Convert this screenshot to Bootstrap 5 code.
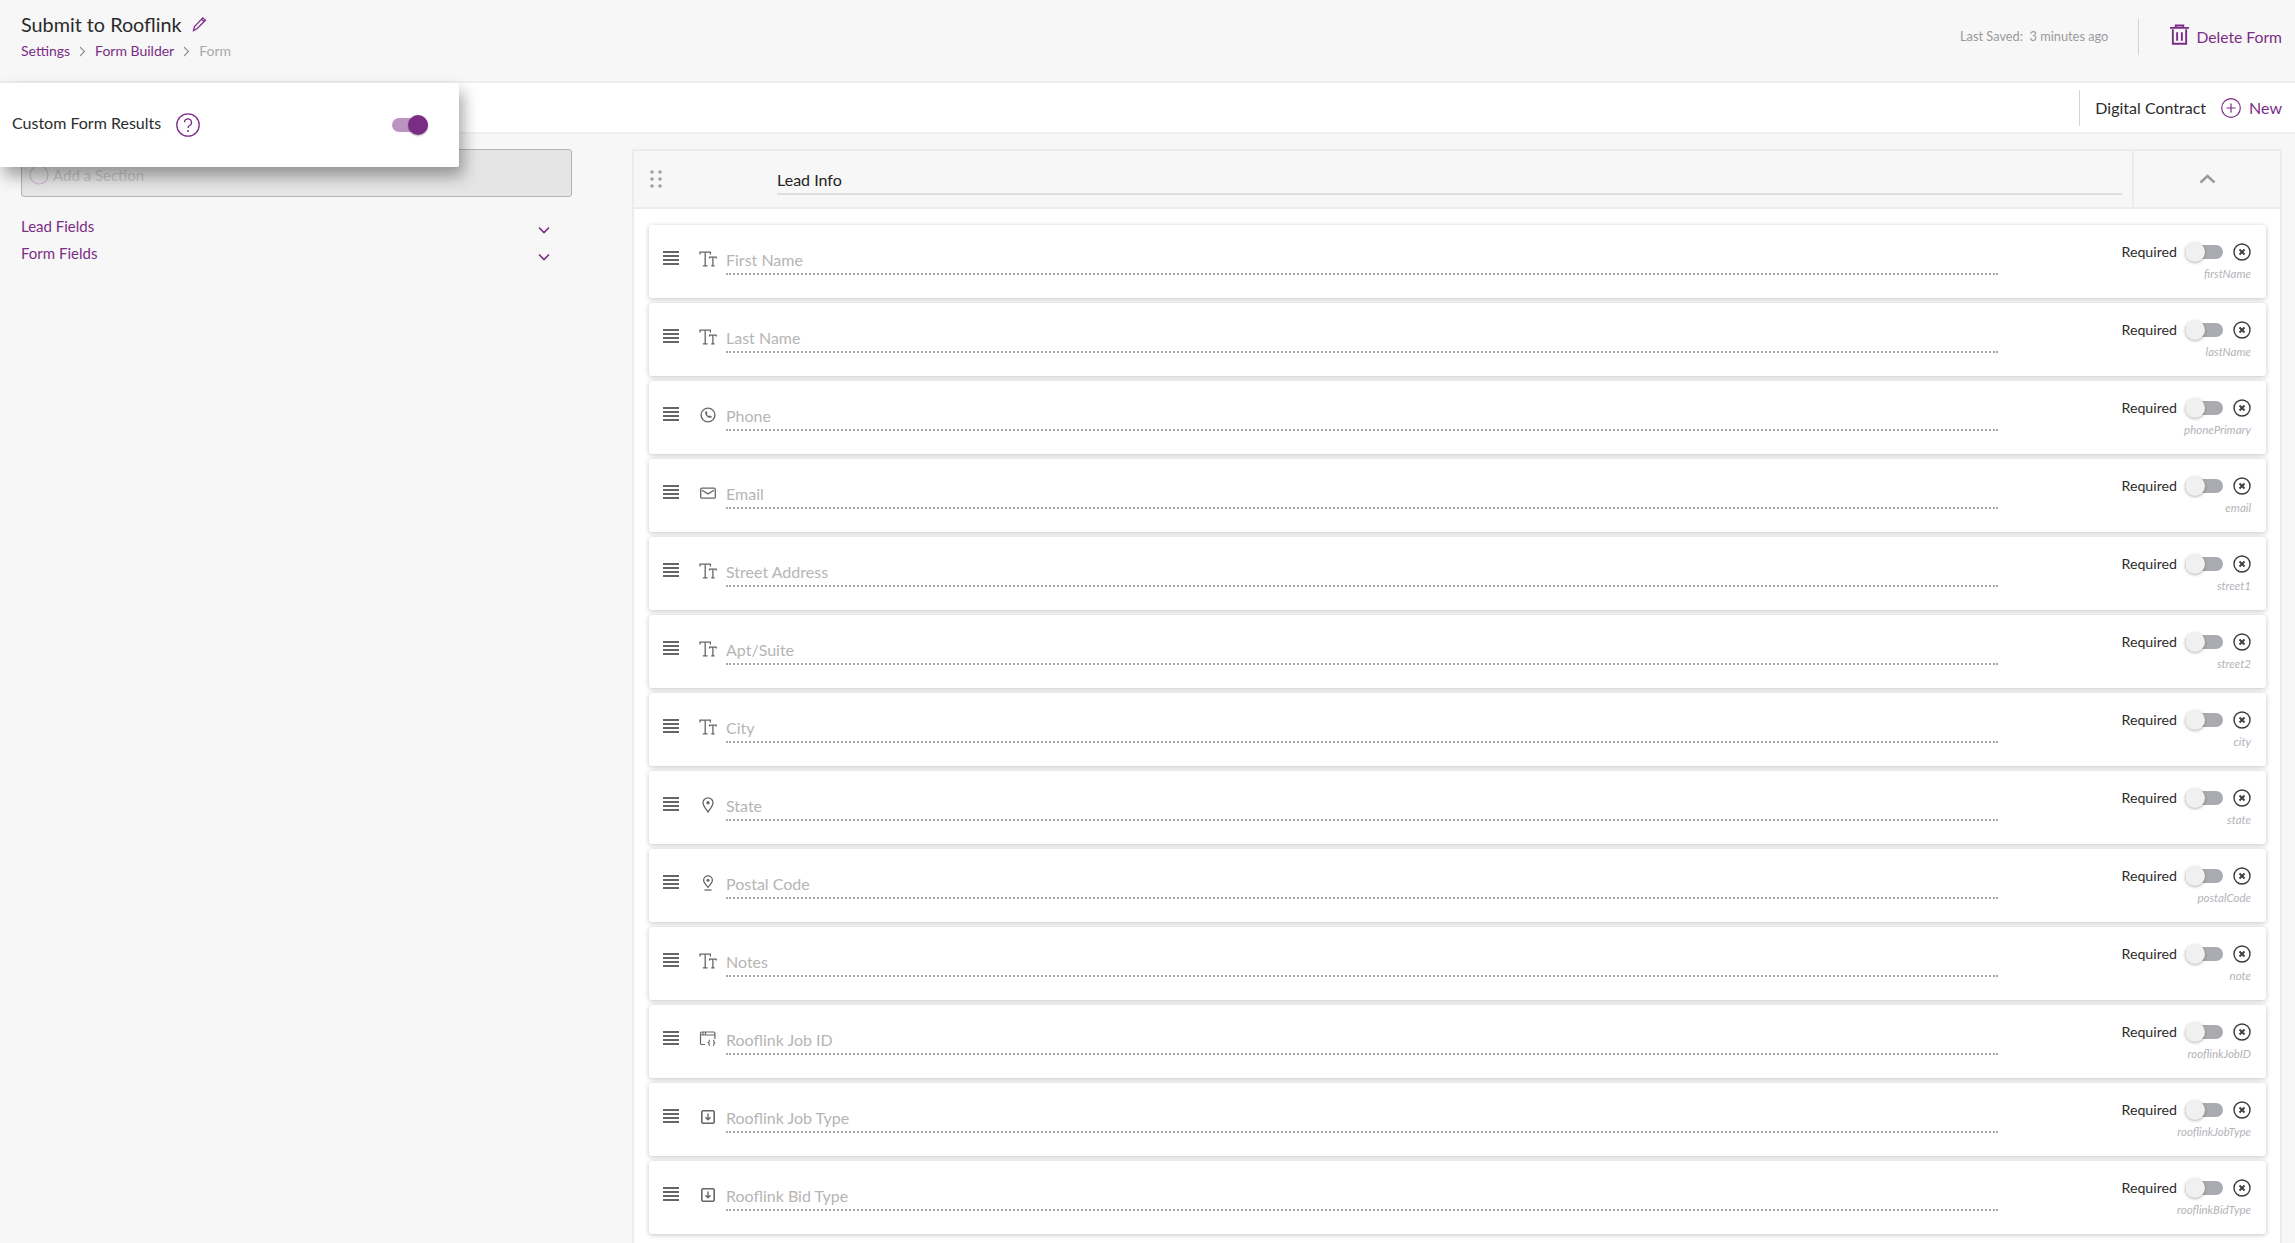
<!DOCTYPE html>
<html lang="en"><head><meta charset="utf-8"><title>Form</title>
<link rel="stylesheet" href="https://cdn.jsdelivr.net/npm/bootstrap@5.3.0/dist/css/bootstrap.min.css">
<style>
html,body{height:100%;overflow:hidden}
body{background:#f7f7f7;font-family:Lato,"Liberation Sans",sans-serif;color:#2b2b2b;position:relative}
.plum{color:#7b2d86}
.plum-link{color:#7b2d86;text-decoration:none}
.top-bar{height:83px;padding:0 13px 0 21px;border-bottom:2px solid #efefef}
.top-title{font-size:19.8px;line-height:24px;margin-top:12px}
.edit-mark{margin-left:10px}
.crumbs{font-size:14px;line-height:18px;margin-top:6px}
.crumbs svg{margin:0 9px 0 9px}
.crumbs .now{color:#aaa}
.top-right{padding-bottom:7px}
.saved{font-size:12.8px;color:#9a9a9a}
.vbar{width:1px;height:36px;background:#d4d4d4}
.vbar-top{margin:0 31px 0 30px}
.del{font-size:15.7px;margin-top:2px;gap:7px}
.trash{margin-top:-6px}
.tab-bar{height:51px;background:#fff;border-bottom:2px solid #efefef;padding:0 13px 0 0;font-size:16px}
.tab-name{margin-left:15px}
.tab-new{margin-left:15px;gap:8px}
.float-panel{position:absolute;left:0;top:83px;width:459px;height:84px;background:#fff;box-shadow:4px 9px 16px rgba(0,0,0,.36);padding-left:12px;z-index:5;font-size:16px;border-radius:0 0 2px 0}
.float-label{margin-top:-4px}
.help-mark{margin:0 192px 0 15px}
.pill-on{width:36px;height:14px;border-radius:7px;background:#bc94c2;position:relative;display:block}
.pill-on::after{content:"";position:absolute;right:0;top:-3px;width:20px;height:20px;border-radius:50%;background:#7b2d86;box-shadow:0 1px 2px rgba(0,0,0,.3)}
.workarea{height:1109px}
.side{width:632px;padding:15px 0 0 21px;flex:none}
.add-box{width:551px;height:48px;background:#e5e5e5;border:1px solid #b4b4b8;border-radius:3px;padding:4px 0 0 7px;color:#c6c6c6;font-size:15px}
.fold{width:529px;font-size:15px;line-height:27px}
.fold svg{margin-top:6px}
.sheet{width:1650px;margin-top:15px;background:#fff;border:2px solid #ececec;border-bottom:0;flex:none}
.sheet-head{height:58px;background:#f7f7f7;border-bottom:2px solid #ececec}
.grip{width:144px;padding:19px 0 0 16px}
.sheet-name{width:1345px;height:44px;font-size:16px;line-height:20px;padding-top:19px;border-bottom:2px solid #dedede;color:#222;flex:none}
.collapse-cell{width:149px;margin-left:10px;height:100%;border-left:2px solid #ececec}
.rows{padding:16px 14px 15px 15px;gap:5px}
.field-row{height:73px;background:#fff;border-radius:3px;box-shadow:0 1px 5px rgba(0,0,0,.24)}
.bars{width:50px;padding:26px 0 0 14px;flex:none}
.ftype{width:27px;padding-top:26px;flex:none;height:50px}
.fname{width:1272px;height:50px;flex:none;padding-top:25px;font-size:16px;line-height:20px;color:#b5b5b5;border-bottom:2px dotted #a8a8a8}
.ftail{margin-left:auto;width:170px;padding:17px 15px 0 0;flex:none;text-align:right}
.req{font-size:14.2px;line-height:20px;color:#2b2b2b}
.pill-off{width:38px;height:14px;margin:0 10px 0 8px;border-radius:7px;background:#a9abb0;position:relative;display:block;flex:none}
.pill-off::after{content:"";position:absolute;left:0;top:-3px;width:20px;height:20px;border-radius:50%;background:#f0f0f0;box-shadow:0 1px 3px rgba(0,0,0,.3)}
.close-mark{flex:none}
.fkey{font-size:11.5px;line-height:15px;margin-top:4px;font-style:italic;color:#b3b3b8}
</style></head>
<body>
<svg width="0" height="0" class="d-block" aria-hidden="true"><defs>
<symbol id="bars" viewBox="0 0 16 14"><path d="M0 1h16M0 5h16M0 9h16M0 13h16" stroke="#666" stroke-width="2" fill="none"/></symbol>
<symbol id="tt" viewBox="0 0 18 16"><path d="M1 3.400V1.200h10.400v2.200M6.200 1.200v13.200M3.800 14.900h4.800M10.600 7.600V6.200h6.600v1.400M13.900 6.200v8.200M12.200 14.900h3.400" stroke="#666" stroke-width="1.300" fill="none"/></symbol>
<symbol id="tel" viewBox="0 0 16 16"><circle cx="8" cy="8" r="6.900" stroke="#666" stroke-width="1.400" fill="none"/><path d="M5.200 4.400c-.6 3.600 2.600 7 6.200 6.400l.3-1.500-2-.9-.9.700c-.9-.4-1.600-1.200-2-2.100l.7-.8-.8-1.900z" fill="#666"/></symbol>
<symbol id="mail" viewBox="0 0 16 16"><rect x=".7" y="3.200" width="14.600" height="10" rx="1.200" stroke="#666" stroke-width="1.300" fill="none"/><path d="M2 5.300l6 3.600 6-3.600" stroke="#666" stroke-width="1.300" fill="none"/></symbol>
<symbol id="pin" viewBox="0 0 12 16"><path d="M6 15C3.500 11.500 1 8.800 1 5.800A5 5 0 0 1 11 5.800C11 8.800 8.500 11.500 6 15z" stroke="#666" stroke-width="1.300" fill="none"/><circle cx="6" cy="5.700" r="1.700" fill="#666"/></symbol>
<symbol id="pinb" viewBox="0 0 12 16"><path d="M6 12.200C3.800 9.800 1.600 7.800 1.600 5.300A4.400 4.400 0 0 1 10.400 5.300C10.400 7.800 8.200 9.800 6 12.200z" stroke="#666" stroke-width="1.300" fill="none"/><circle cx="6" cy="5.200" r="1.500" fill="#666"/><path d="M2.500 15h7" stroke="#666" stroke-width="1.300"/></symbol>
<symbol id="code" viewBox="0 0 17 16"><path d="M5.500 13.500H2.200a1.200 1.200 0 0 1-1.200-1.200V2.200A1.200 1.200 0 0 1 2.200 1h12a1.200 1.200 0 0 1 1.200 1.200V8M1 4h14.400M3.500 1v3M6 1v3" stroke="#666" stroke-width="1.200" fill="none"/><path d="M10.500 9c-1.300 0-.6 2.400-1.500 2.800.9.400.2 2.700 1.500 2.700M13.500 9c1.300 0 .6 2.400 1.500 2.800-.9.400-.2 2.700-1.500 2.700" stroke="#666" stroke-width="1.200" fill="none"/></symbol>
<symbol id="drop" viewBox="0 0 16 16"><rect x="1.800" y="1.800" width="12.400" height="12.400" rx="1.500" stroke="#666" stroke-width="1.600" fill="none"/><path d="M8 4.500v6M5.500 8.300L8 10.800l2.500-2.500" stroke="#666" stroke-width="1.400" fill="none"/></symbol>
<symbol id="xc" viewBox="0 0 18 18"><circle cx="9" cy="9" r="8" stroke="#3c3c3c" stroke-width="1.400" fill="none"/><path d="M6.500 6.500l5 5M11.500 6.500l-5 5" stroke="#3c3c3c" stroke-width="1.800" fill="none"/></symbol>
<symbol id="down" viewBox="0 0 12 8"><path d="M1 1.500l5 5 5-5" stroke="#7b2d86" stroke-width="1.600" fill="none"/></symbol>
<symbol id="sep" viewBox="0 0 7 11"><path d="M1 1l4.500 4.500L1 10" stroke="#8e8e8e" stroke-width="1.100" fill="none"/></symbol>
</defs></svg>

<header class="top-bar d-flex justify-content-between">
  <div>
    <div class="top-title d-flex align-items-center">Submit to Rooflink
      <svg class="edit-mark" width="15" height="16" viewBox="0 0 15 16"><path d="M1.500 14.500l1-4L10.800 1.800l2.700 2.500L5 12.800zM9.500 3.200l2.700 2.500" stroke="#7b2d86" stroke-width="1.300" fill="none"/></svg>
    </div>
    <div class="crumbs d-flex align-items-center"><a class="plum-link" href="#">Settings</a><svg width="7" height="11"><use href="#sep"/></svg><a class="plum-link" href="#">Form Builder</a><svg width="7" height="11"><use href="#sep"/></svg><span class="now">Form</span></div>
  </div>
  <div class="top-right d-flex align-items-center">
    <span class="saved">Last Saved:&nbsp; 3 minutes ago</span>
    <span class="vbar vbar-top"></span>
    <a class="del plum-link d-flex align-items-center" href="#"><svg class="trash" width="19" height="21" viewBox="0 0 20 22"><path d="M0 4h20M6 4V1.500h8V4M3 5.500V20.800h14V5.500M7.500 8.500v9M12.500 8.500v9" stroke="#7b2d86" stroke-width="2" fill="none"/></svg>Delete Form</a>
  </div>
</header>

<div class="tab-bar d-flex justify-content-end align-items-center">
  <span class="vbar"></span>
  <span class="tab-name">Digital Contract</span>
  <a class="tab-new plum-link d-flex align-items-center" href="#"><svg width="20" height="20" viewBox="0 0 20 20"><circle cx="10" cy="10" r="9.300" stroke="#7b2d86" stroke-width="1.200" fill="none"/><path d="M10 5.500v9M5.500 10h9" stroke="#7b2d86" stroke-width="1.200"/></svg>New</a>
</div>

<section class="float-panel d-flex align-items-center">
  <span class="float-label">Custom Form Results</span>
  <svg class="help-mark" width="24" height="24" viewBox="0 0 24 24"><circle cx="12" cy="12" r="11.200" stroke="#7b2d86" stroke-width="1.300" fill="none"/><path d="M8.500 9.300A3.500 3.500 0 1 1 13.500 12.500c-1 .6-1.500 1.100-1.500 2.500" stroke="#7b2d86" stroke-width="1.300" fill="none"/><circle cx="12" cy="18" r="1" fill="#7b2d86"/></svg>
  <span class="pill-on"></span>
</section>

<main class="workarea d-flex">
  <aside class="side">
    <div class="add-box d-flex align-items-center gap-1 mb-3"><svg width="20" height="20" viewBox="0 0 20 20"><circle cx="10" cy="10" r="9" stroke="#cdb8d1" stroke-width="1.200" fill="none"/></svg>Add a Section</div>
    <div class="fold d-flex justify-content-between align-items-center plum">Lead Fields<svg width="12" height="8"><use href="#down"/></svg></div>
    <div class="fold d-flex justify-content-between align-items-center plum">Form Fields<svg width="12" height="8"><use href="#down"/></svg></div>
  </aside>
  <section class="sheet">
    <div class="sheet-head d-flex">
      <div class="grip"><svg width="12" height="18" viewBox="0 0 12 18" class="d-block" fill="#a0a0a0"><circle cx="2" cy="2" r="1.800"/><circle cx="10" cy="2" r="1.800"/><circle cx="2" cy="9" r="1.800"/><circle cx="10" cy="9" r="1.800"/><circle cx="2" cy="16" r="1.800"/><circle cx="10" cy="16" r="1.800"/></svg></div>
      <div class="sheet-name">Lead Info</div>
      <div class="collapse-cell d-flex align-items-center justify-content-center"><svg width="17" height="10" viewBox="0 0 17 10"><path d="M1.500 8.500l7-6.500 7 6.500" stroke="#9a9a9a" stroke-width="2.500" fill="none"/></svg></div>
    </div>
    <div class="rows d-flex flex-column">
      <div class="field-row d-flex"><div class="bars"><svg width="16" height="14" class="d-block"><use href="#bars"/></svg></div><div class="ftype"><svg width="18" height="16" class="d-block"><use href="#tt"/></svg></div><div class="fname">First Name</div><div class="ftail"><div class="d-flex align-items-center justify-content-end"><span class="req">Required</span><span class="pill-off"></span><svg class="close-mark" width="18" height="18"><use href="#xc"/></svg></div><div class="fkey">firstName</div></div></div>
      <div class="field-row d-flex"><div class="bars"><svg width="16" height="14" class="d-block"><use href="#bars"/></svg></div><div class="ftype"><svg width="18" height="16" class="d-block"><use href="#tt"/></svg></div><div class="fname">Last Name</div><div class="ftail"><div class="d-flex align-items-center justify-content-end"><span class="req">Required</span><span class="pill-off"></span><svg class="close-mark" width="18" height="18"><use href="#xc"/></svg></div><div class="fkey">lastName</div></div></div>
      <div class="field-row d-flex"><div class="bars"><svg width="16" height="14" class="d-block"><use href="#bars"/></svg></div><div class="ftype"><svg width="18" height="16" class="d-block"><use href="#tel"/></svg></div><div class="fname">Phone</div><div class="ftail"><div class="d-flex align-items-center justify-content-end"><span class="req">Required</span><span class="pill-off"></span><svg class="close-mark" width="18" height="18"><use href="#xc"/></svg></div><div class="fkey">phonePrimary</div></div></div>
      <div class="field-row d-flex"><div class="bars"><svg width="16" height="14" class="d-block"><use href="#bars"/></svg></div><div class="ftype"><svg width="18" height="16" class="d-block"><use href="#mail"/></svg></div><div class="fname">Email</div><div class="ftail"><div class="d-flex align-items-center justify-content-end"><span class="req">Required</span><span class="pill-off"></span><svg class="close-mark" width="18" height="18"><use href="#xc"/></svg></div><div class="fkey">email</div></div></div>
      <div class="field-row d-flex"><div class="bars"><svg width="16" height="14" class="d-block"><use href="#bars"/></svg></div><div class="ftype"><svg width="18" height="16" class="d-block"><use href="#tt"/></svg></div><div class="fname">Street Address</div><div class="ftail"><div class="d-flex align-items-center justify-content-end"><span class="req">Required</span><span class="pill-off"></span><svg class="close-mark" width="18" height="18"><use href="#xc"/></svg></div><div class="fkey">street1</div></div></div>
      <div class="field-row d-flex"><div class="bars"><svg width="16" height="14" class="d-block"><use href="#bars"/></svg></div><div class="ftype"><svg width="18" height="16" class="d-block"><use href="#tt"/></svg></div><div class="fname">Apt/Suite</div><div class="ftail"><div class="d-flex align-items-center justify-content-end"><span class="req">Required</span><span class="pill-off"></span><svg class="close-mark" width="18" height="18"><use href="#xc"/></svg></div><div class="fkey">street2</div></div></div>
      <div class="field-row d-flex"><div class="bars"><svg width="16" height="14" class="d-block"><use href="#bars"/></svg></div><div class="ftype"><svg width="18" height="16" class="d-block"><use href="#tt"/></svg></div><div class="fname">City</div><div class="ftail"><div class="d-flex align-items-center justify-content-end"><span class="req">Required</span><span class="pill-off"></span><svg class="close-mark" width="18" height="18"><use href="#xc"/></svg></div><div class="fkey">city</div></div></div>
      <div class="field-row d-flex"><div class="bars"><svg width="16" height="14" class="d-block"><use href="#bars"/></svg></div><div class="ftype"><svg width="18" height="16" class="d-block"><use href="#pin"/></svg></div><div class="fname">State</div><div class="ftail"><div class="d-flex align-items-center justify-content-end"><span class="req">Required</span><span class="pill-off"></span><svg class="close-mark" width="18" height="18"><use href="#xc"/></svg></div><div class="fkey">state</div></div></div>
      <div class="field-row d-flex"><div class="bars"><svg width="16" height="14" class="d-block"><use href="#bars"/></svg></div><div class="ftype"><svg width="18" height="16" class="d-block"><use href="#pinb"/></svg></div><div class="fname">Postal Code</div><div class="ftail"><div class="d-flex align-items-center justify-content-end"><span class="req">Required</span><span class="pill-off"></span><svg class="close-mark" width="18" height="18"><use href="#xc"/></svg></div><div class="fkey">postalCode</div></div></div>
      <div class="field-row d-flex"><div class="bars"><svg width="16" height="14" class="d-block"><use href="#bars"/></svg></div><div class="ftype"><svg width="18" height="16" class="d-block"><use href="#tt"/></svg></div><div class="fname">Notes</div><div class="ftail"><div class="d-flex align-items-center justify-content-end"><span class="req">Required</span><span class="pill-off"></span><svg class="close-mark" width="18" height="18"><use href="#xc"/></svg></div><div class="fkey">note</div></div></div>
      <div class="field-row d-flex"><div class="bars"><svg width="16" height="14" class="d-block"><use href="#bars"/></svg></div><div class="ftype"><svg width="18" height="16" class="d-block"><use href="#code"/></svg></div><div class="fname">Rooflink Job ID</div><div class="ftail"><div class="d-flex align-items-center justify-content-end"><span class="req">Required</span><span class="pill-off"></span><svg class="close-mark" width="18" height="18"><use href="#xc"/></svg></div><div class="fkey">rooflinkJobID</div></div></div>
      <div class="field-row d-flex"><div class="bars"><svg width="16" height="14" class="d-block"><use href="#bars"/></svg></div><div class="ftype"><svg width="18" height="16" class="d-block"><use href="#drop"/></svg></div><div class="fname">Rooflink Job Type</div><div class="ftail"><div class="d-flex align-items-center justify-content-end"><span class="req">Required</span><span class="pill-off"></span><svg class="close-mark" width="18" height="18"><use href="#xc"/></svg></div><div class="fkey">rooflinkJobType</div></div></div>
      <div class="field-row d-flex"><div class="bars"><svg width="16" height="14" class="d-block"><use href="#bars"/></svg></div><div class="ftype"><svg width="18" height="16" class="d-block"><use href="#drop"/></svg></div><div class="fname">Rooflink Bid Type</div><div class="ftail"><div class="d-flex align-items-center justify-content-end"><span class="req">Required</span><span class="pill-off"></span><svg class="close-mark" width="18" height="18"><use href="#xc"/></svg></div><div class="fkey">rooflinkBidType</div></div></div>
    </div>
  </section>
</main>
</body></html>
